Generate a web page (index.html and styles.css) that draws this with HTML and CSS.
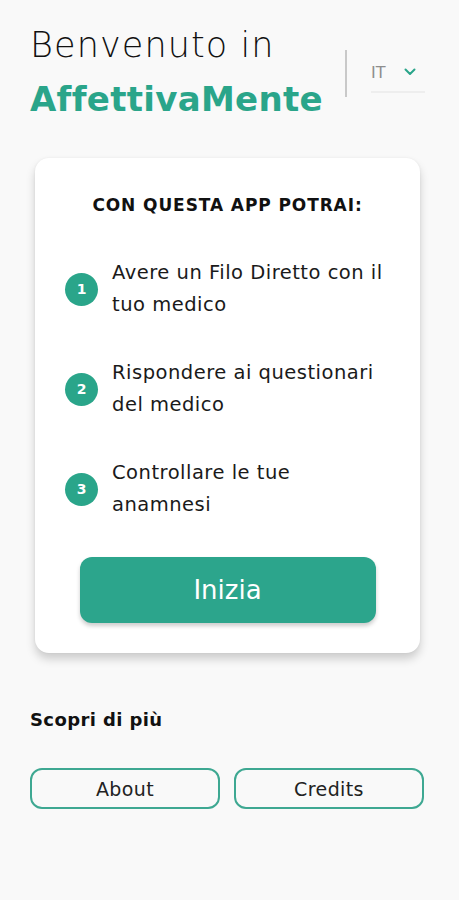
FILE: index.html
```html
<html>
  <head>
    <title>AffettivaMente</title>
    <link rel="stylesheet" href="styles.css">
  </head>
  <body>
    <div id="main">
      <div id="header">
        <div id="welcome">
          <div class="welcome_line">Benvenuto in</div>
          <div class="brand">AffettivaMente</div>
        </div>
        <div id="lang_box">
          <div class="lang_divider"></div>
          <div class="lang_select">
            <span class="lang_code">IT</span>
            <svg class="chevron" width="12" height="8" viewBox="0 0 12 8">
              <path d="M1.5 1.5 L6 6 L10.5 1.5" fill="none" stroke="#2aa58a" stroke-width="2" stroke-linecap="round" stroke-linejoin="round"/>
            </svg>
          </div>
        </div>
      </div>

      <div id="card">
        <div class="card_title">CON QUESTA APP POTRAI:</div>
        <div class="steps">
          <div class="step">
            <div class="step_num">1</div>
            <div class="step_text">Avere un Filo Diretto con il tuo medico</div>
          </div>
          <div class="step">
            <div class="step_num">2</div>
            <div class="step_text">Rispondere ai questionari del medico</div>
          </div>
          <div class="step">
            <div class="step_num">3</div>
            <div class="step_text">Controllare le tue anamnesi</div>
          </div>
        </div>
        <div class="start_button">Inizia</div>
      </div>

      <div id="more">
        <div class="more_title">Scopri di più</div>
        <div class="more_buttons">
          <div class="outline_button">About</div>
          <div class="outline_button">Credits</div>
        </div>
      </div>
    </div>
  </body>
</html>
```

FILE: styles.css
```css
body {
  margin: 0;
  padding: 0;
  background-color: #f9f9f9;
  font-family: "DejaVu Sans", "Open Sans", sans-serif;
  color: #111;
}
div {
  margin: 0;
  padding: 0;
}
#main {
  display: flex;
  flex-direction: column;
  padding: 0 30px;
}
#header {
  display: flex;
  flex-direction: row;
  justify-content: space-between;
  padding-top: 21px;
}
.welcome_line {
  font-size: 35px;
  font-weight: 200;
  line-height: 48px;
  letter-spacing: 1.1px;
}
.brand {
  font-size: 34px;
  font-weight: 700;
  line-height: 60px;
  color: #2aa58a;
  letter-spacing: 0.3px;
}
#lang_box {
  display: flex;
  flex-direction: row;
  align-items: flex-start;
  padding-top: 29px;
  padding-right: 4px;
}
.lang_divider {
  width: 2px;
  height: 47px;
  background-color: #c9c9c9;
  margin-right: 24px;
}
.lang_select {
  display: flex;
  flex-direction: row;
  align-items: center;
  width: 54px;
  height: 40px;
  border-bottom: 2px solid #eeeeee;
  margin-top: 3px;
  box-sizing: border-box;
}
.lang_code {
  font-size: 16px;
  color: #8e8e8e;
  margin-right: 18px;
}
#card {
  display: flex;
  flex-direction: column;
  align-items: center;
  margin: 29px 9px 0 5px;
  padding: 37px 0 30px 0;
  background-color: #ffffff;
  border-radius: 14px;
  box-shadow: 0 6px 10px rgba(0, 0, 0, 0.18), 0 0 3px rgba(0, 0, 0, 0.05);
}
.card_title {
  font-size: 17px;
  font-weight: 700;
  letter-spacing: 0.9px;
}
.steps {
  display: flex;
  flex-direction: column;
  gap: 36px;
  width: 100%;
  padding: 42px 30px 0 30px;
  box-sizing: border-box;
}
.step {
  display: flex;
  flex-direction: row;
  align-items: center;
}
.step_num {
  display: flex;
  align-items: center;
  justify-content: center;
  flex: 0 0 auto;
  width: 33px;
  height: 33px;
  border-radius: 50%;
  background-color: #2aa58a;
  color: #fff;
  font-size: 14px;
  font-weight: 700;
  margin-right: 14px;
}
.step_text {
  font-size: 19.5px;
  line-height: 32px;
  letter-spacing: 0.5px;
  color: #1a1a1a;
}
.start_button {
  display: flex;
  align-items: center;
  justify-content: center;
  width: 296px;
  height: 66px;
  margin-top: 36px;
  background-color: #2ca58c;
  border-radius: 12px;
  color: #fff;
  font-size: 26px;
  box-shadow: 0 3px 4px rgba(0, 0, 0, 0.2);
}
#more {
  display: flex;
  flex-direction: column;
  padding-top: 56px;
}
.more_title {
  font-size: 18px;
  font-weight: 700;
  letter-spacing: 0.4px;
}
.more_buttons {
  display: flex;
  flex-direction: row;
  gap: 14px;
  margin-top: 38px;
  padding-right: 5px;
}
.outline_button {
  flex: 1 1 0;
  display: flex;
  align-items: center;
  justify-content: center;
  height: 37px;
  border: 2px solid #3ea892;
  border-radius: 12px;
  font-size: 19px;
  letter-spacing: 0.4px;
  color: #222;
}
```
